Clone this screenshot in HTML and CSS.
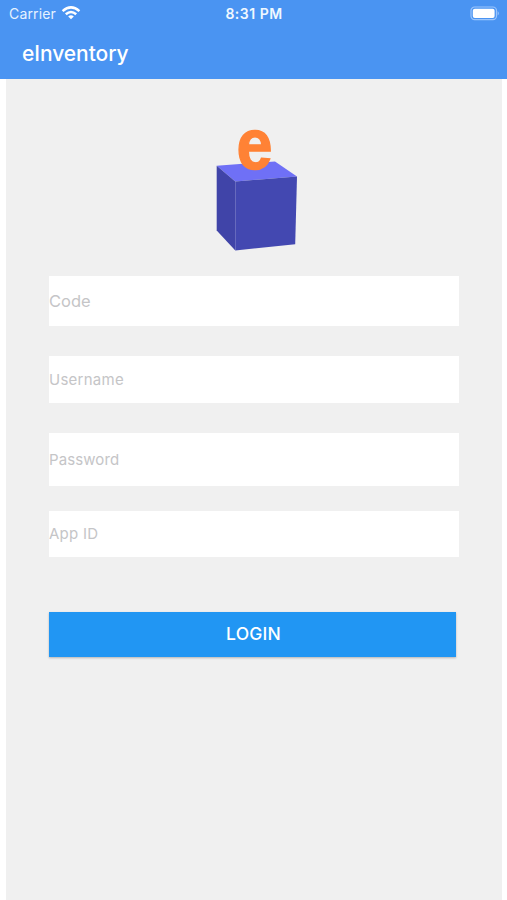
FILE: index.html
```html
<!DOCTYPE html>
<html lang="en">
<head>
<meta charset="utf-8">
<title>eInventory</title>
<link rel="stylesheet" href="styles.css">
</head>
<body>
<header class="top">
  <div class="status">
    <div class="carrier"><span>Carrier</span>
      <svg class="wifi" width="20" height="16" viewBox="0 0 20 16" fill="none" stroke="#fff" stroke-width="2.5">
        <path d="M1.6 6.1Q10-1.4 18.4 6.1"/><path d="M4.8 9.3Q10 4.7 15.2 9.3"/>
        <path d="M7.2 11.4Q10 8.9 12.8 11.4L10 14.3Z" fill="#fff" stroke="none"/>
      </svg>
    </div>
    <div class="time">8:31 PM</div>
    <svg class="battery" width="30" height="15" viewBox="0 0 30 15">
      <rect x="1" y="1" width="25.5" height="12.7" rx="3.6" fill="none" stroke="#9bc5fc" stroke-width="1.2"/>
      <rect x="2.8" y="2.8" width="21.8" height="9.2" rx="2" fill="#fff"/>
      <path d="M27.7 5Q30 7.3 27.7 9.6Z" fill="#9bc5fc"/>
    </svg>
  </div>
  <h1 class="title">eInventory</h1>
</header>
<main class="page">
  <svg class="logo" width="82" height="152" viewBox="216 100 82 152">
    <path d="M216.7 165.7L275 161.5 297 176.5 235.3 181.4Z" fill="#6f70f6"/>
    <path d="M216.7 165.7L235.3 181.4V250.5L216.7 230.5Z" fill="#4044a8"/>
    <path d="M235.3 181.4L297 176.5 295.2 244.3 235.3 250.5Z" fill="#4348b1"/>
    <text class="mark" x="236.5" y="169.2" textLength="36" lengthAdjust="spacingAndGlyphs">e</text>
  </svg>
  <form class="form">
    <input class="field code" type="text" placeholder="Code">
    <input class="field username" type="text" placeholder="Username">
    <input class="field password" type="password" placeholder="Password">
    <input class="field app" type="text" placeholder="App ID">
    <button class="login" type="button">LOGIN</button>
  </form>
</main>
</body>
</html>
```
FILE: styles.css
```css
* { box-sizing: border-box; }
body {
  margin: 0;
  height: 900px;
  overflow: hidden;
  background: #fff;
  font-family: Inter, "Liberation Sans", sans-serif;
  display: flex;
  flex-direction: column;
}
.top {
  height: 79px;
  flex: none;
  background: #4a94f2;
  color: #fff;
}
.status {
  height: 27px;
  padding: 0 7px 0 9px;
  display: grid;
  grid-template-columns: 1fr auto 1fr;
  align-items: center;
  font-size: 14px;
}
.carrier { display: flex; align-items: center; gap: 5px; color: #e6f2ff; letter-spacing: 0.15px; }
.wifi { margin-top: -1px; }
.time { font-weight: 600; letter-spacing: 0.5px; margin-right: 1px; color: #f0f8ff; }
.battery { justify-self: end; margin-top: -1px; }
.title {
  margin: 0;
  padding-left: 22px;
  font-size: 21px;
  line-height: 53px;
  font-weight: 500;
  letter-spacing: -0.05px;
}
.page {
  flex: 1;
  margin: 0 5px 0 6px;
  padding: 21px 43px 0 42.5px;
  background: #f0f0f0;
  display: flex;
  flex-direction: column;
}
.logo { margin-left: 167.5px; flex: none; }
.mark { font: 700 73px "Liberation Sans", sans-serif; fill: #ff8235; stroke: #ff8235; stroke-width: 1.4px; }
.form { margin-top: 24px; display: flex; flex-direction: column; }
.field {
  width: 100%;
  border: 0;
  border-radius: 0;
  padding: 0 0.5px;
  background: #fff;
  font: 400 15px Inter, "Liberation Sans", sans-serif;
  letter-spacing: 0.25px;
  outline: none;
}
.field::placeholder { color: #c5c5c7; opacity: 1; }
.code { height: 49.5px; font-size: 16.5px; letter-spacing: 0; }
.username { height: 47px; margin-top: 30.5px; }
.password { height: 53px; margin-top: 30px; padding-bottom: 1px; letter-spacing: 0.1px; }
.app { height: 46px; margin-top: 24.5px; }
.login {
  height: 45px;
  margin: 55.5px 3px 0 0.5px;
  padding: 0 0 2px 2px;
  border: 0;
  background: #2196f3;
  color: #fff;
  font: 500 17.5px Inter, "Liberation Sans", sans-serif;
  letter-spacing: 0.2px;
  box-shadow: 0 1px 2px rgba(0, 0, 0, 0.25);
}
```
